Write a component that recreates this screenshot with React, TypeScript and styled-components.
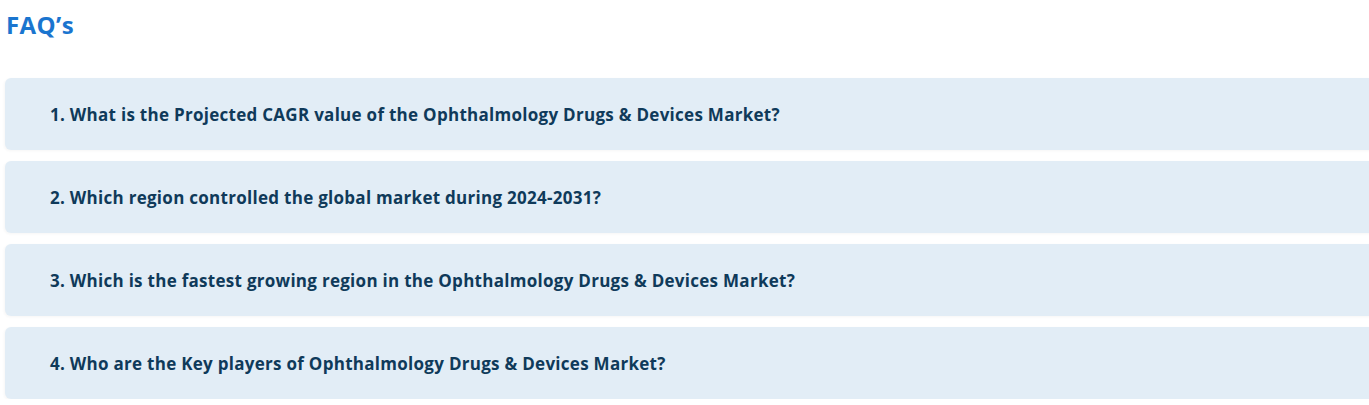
import styled, { createGlobalStyle } from 'styled-components'

const GlobalStyle = createGlobalStyle`
  body {
    margin: 0;
    background: #ffffff;
    font-family: 'Open Sans', Lato, sans-serif;
  }
`

const Section = styled.section`
  padding: 8px 0 0 5px;
  overflow: hidden;
`

const Heading = styled.h2`
  margin: 0 0 0 1px;
  font-size: 24px;
  font-weight: 700;
  line-height: 34px;
  letter-spacing: 0.4px;
  color: #1a75cf;
`

const List = styled.div`
  display: flex;
  flex-direction: column;
  gap: 11px;
  margin-top: 36px;
  width: 1380px;
`

const Question = styled.div`
  display: flex;
  align-items: center;
  height: 72px;
  padding-left: 45px;
  border-radius: 6px;
  background: #e2edf6;
  box-shadow: -1px 1px 3px rgba(0, 0, 0, 0.04);
  font-size: 17px;
  font-weight: 700;
  letter-spacing: 0.28px;
  color: #0f3a5a;
  box-sizing: border-box;
`

const questions = [
  'What is the Projected CAGR value of the Ophthalmology Drugs & Devices Market?',
  'Which region controlled the global market during 2024-2031?',
  'Which is the fastest growing region in the Ophthalmology Drugs & Devices Market?',
  'Who are the Key players of Ophthalmology Drugs & Devices Market?',
]

const App = () => {
  return (
    <>
      <GlobalStyle />
      <Section>
        <Heading>FAQ’s</Heading>
        <List>
          {questions.map((q, i) => (
            <Question key={i}>
              {i + 1}. {q}
            </Question>
          ))}
        </List>
      </Section>
    </>
  )
}

export default App
